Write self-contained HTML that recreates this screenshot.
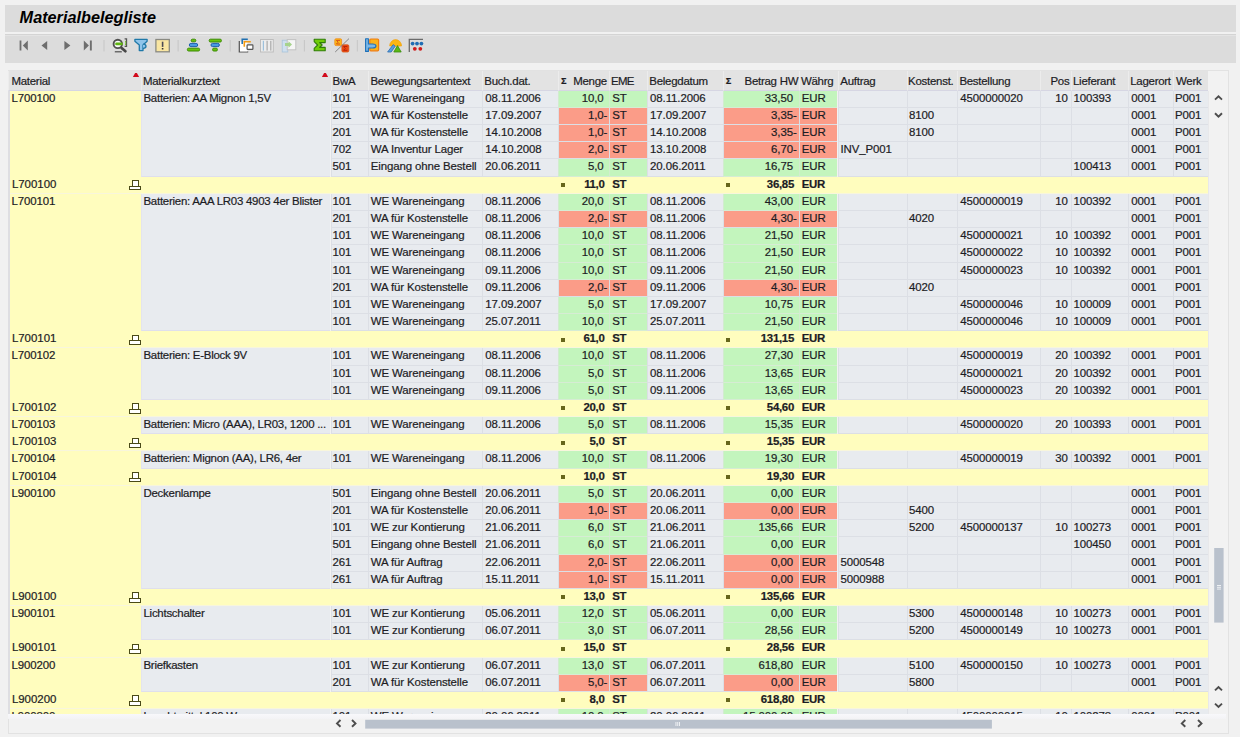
<!DOCTYPE html>
<html><head><meta charset="utf-8">
<style>
*{margin:0;padding:0}
html,body{width:1240px;height:737px;overflow:hidden;background:#f1f1f1;font-family:"Liberation Sans",sans-serif;color:#1c1c24}
.c,.h,.sub{-webkit-text-stroke:0.2px #1c1c24}
.abs{position:absolute}
#title{position:absolute;left:5px;top:5px;width:1231px;height:27px;background:#dcdcdc}
#title span{position:absolute;left:14.6px;top:2.6px;font-size:16.25px;font-weight:bold;font-style:italic;color:#000;letter-spacing:0}
#tb{position:absolute;left:5px;top:34.2px;width:1231px;height:28.5px;background:#dcdcdc;border-top:1px solid #d4d4d4;box-shadow:inset 0 1px 0 #e4e4e4;box-sizing:border-box}
#tb svg{position:absolute;overflow:visible}
.sep{position:absolute;top:6px;width:1px;height:11px;background:#c4c4c4}
#gridbox{position:absolute;left:8px;top:70px;width:1220.6px;height:664px;background:#f2f2f2;border:1px solid #e2e2e2;box-sizing:border-box}
#hdrrow{position:absolute;left:8.4px;top:70.5px;width:1199.6px;height:20px;background:#e3e3e3}
.h{position:absolute;top:70.5px;height:20px;box-sizing:border-box;border-left:1px solid #ececec;border-bottom:1px solid #d6d6e3;font-size:11.45px;line-height:20px;letter-spacing:-0.25px;white-space:nowrap;overflow:hidden}
.h span{position:absolute;left:3px;top:0}
.h.r span{left:auto;right:3px}
.tri{position:absolute;top:2.3px;width:6.2px;height:4.2px;background:#d20a1c;clip-path:polygon(0 100%,100% 100%,62% 0,38% 0)}
.sig{position:absolute;left:1.6px;top:0.3px;font-style:normal;font-size:9.2px;font-weight:bold}
#clip{position:absolute;left:8.4px;top:90.5px;width:1199.6px;height:623px;overflow:hidden}
#inner{position:absolute;left:-8.4px;top:-90.5px;width:1240px;height:737px}
.c{position:absolute;height:17.177px;box-sizing:border-box;border-left:1px solid #dcdfe5;border-bottom:1px solid #dcdfe5;font-size:11.45px;line-height:14.5px;letter-spacing:-0.1px;white-space:nowrap;overflow:hidden}
.c span{position:absolute;left:2px;top:0}
.c.r span{left:auto;right:3.5px}
.c.pos span,.c.neg span{right:2px}
.c i, .st i{font-style:normal;visibility:hidden}
.txt span{letter-spacing:-0.25px}
.tt span{letter-spacing:-0.12px}
.mat{background:#fffdbe;border-left:1px solid #ececf0;border-bottom:0}
.txt{background:#e8ebef;border-left:1px solid #e4e4ee;border-bottom:1px solid #dfdfec}
.g{background:#e8ebef}
.pos{background:#c3f5bd;border-left-color:#d2eccf!important;border-bottom-color:#d6ecd4!important}
.neg{background:#fb9c88}
.sub{position:absolute;left:8.4px;width:1199.6px;height:17.177px;box-sizing:border-box;background:#fffdbe;border-bottom:1px solid #f8f6dc;font-size:11.45px;line-height:14.3px;white-space:nowrap}
.sub span{position:absolute;top:0}
.sub .st{font-weight:bold;letter-spacing:-0.3px}
.sub .st.r{text-align:right}
.sq{position:absolute;top:6.4px;width:4.2px;height:4px;background:#66661c}
.ico{position:absolute;top:0;width:14px;height:17px}
.ico:before{content:"";position:absolute;left:3.6px;top:3.3px;width:6.75px;height:6.2px;box-sizing:border-box;border:1.6px solid #4a4a18;border-bottom:0;background:#fff}
.ico:after{content:"";position:absolute;left:0.6px;top:9px;width:12.5px;height:4.7px;box-sizing:border-box;border:1.6px solid #4a4a18;background:#fff}
#vsb{position:absolute;left:1208px;top:90.5px;width:19px;height:623px}
#hsb{position:absolute;left:8.4px;top:714px;width:1218px;height:18px}
.thumb{position:absolute;background:#b9c2cd}
.chev{position:absolute;width:5px;height:5px;border-left:2px solid #555;border-top:2px solid #555;box-sizing:border-box}
</style></head><body>
<div id="title"><span>Materialbelegliste</span></div>
<div id="tb"></div>
<svg style="position:absolute;left:0;top:0" width="440" height="64" viewBox="0 0 440 64">
 <g fill="#6e6e6e">
  <rect x="19.6" y="40.5" width="1.8" height="10"/><path d="M27.8 40.5 L22.8 45.5 L27.8 50.5Z"/>
  <path d="M47.2 41 L41.5 45.5 L47.2 50Z"/>
  <path d="M64.4 41 L70.4 45.5 L64.4 50Z"/>
  <path d="M83.8 40.5 L88.9 45.5 L83.8 50.5Z"/><rect x="89.9" y="40.5" width="1.9" height="10"/>
 </g>
 <g fill="#c6c6c6">
  <rect x="103.5" y="40" width="1" height="11.5"/>
  <rect x="177.6" y="40" width="1" height="11.5"/>
  <rect x="229.7" y="40" width="1" height="11.5"/>
  <rect x="303.9" y="40" width="1" height="11.5"/>
  <rect x="356.8" y="40" width="1" height="11.5"/>
 </g>
 <!-- find -->
 <g>
  <path d="M124.6 38.9 H126.5 V46.4 H124.6" fill="none" stroke="#555" stroke-width="1.3"/>
  <rect x="125" y="41.2" width="1.2" height="1.4" fill="#6abf1a"/><rect x="125" y="43.4" width="1.2" height="1.4" fill="#6abf1a"/>
  <circle cx="117.8" cy="43.9" r="4.2" fill="#fafafa" stroke="#505050" stroke-width="1.9"/>
  <rect x="115.2" y="42.5" width="7.6" height="2.8" rx="1.3" fill="#5fb412"/>
  <path d="M121.6 48 L125.4 51.2" stroke="#484848" stroke-width="2.8" stroke-linecap="round"/>
  <rect x="114.8" y="51.2" width="7" height="1.2" fill="#505050"/>
 </g>
 <!-- filter -->
 <path d="M134.9 39.3 H147.1 V41.2 L143 45 V50.6 H139.3 V45 L134.9 41.2Z" fill="#8fc4ea" stroke="#1f78a8" stroke-width="1.3" stroke-linejoin="round"/>
 <path d="M143 44.2 Q146 44.2 146 46.3 Q146 48.3 143 48.3" fill="#8fc4ea" stroke="#1f78a8" stroke-width="1.3"/>
 <!-- exclam -->
 <rect x="155.9" y="39.5" width="13.4" height="12.3" fill="#f9e6a2" stroke="#8a8a82" stroke-width="1.3"/>
 <rect x="161.8" y="41.7" width="1.6" height="5.2" fill="#4a4a55"/><rect x="161.8" y="48" width="1.6" height="1.5" fill="#333"/>
 <!-- sort asc -->
 <g stroke-width="1">
  <rect x="191.2" y="39.2" width="4.6" height="2.6" rx="1.2" fill="#6ac40c" stroke="#3a8a05"/>
  <rect x="189.3" y="43.4" width="8.4" height="3.2" rx="1.6" fill="#4a9be0" stroke="#1d5fae"/>
  <rect x="187.4" y="48.2" width="12.2" height="2.8" rx="1.2" fill="#6ac40c" stroke="#3a8a05"/>
  <rect x="209.2" y="39.2" width="12.2" height="2.8" rx="1.2" fill="#6ac40c" stroke="#3a8a05"/>
  <rect x="211" y="43.4" width="8.4" height="3.2" rx="1.6" fill="#4a9be0" stroke="#1d5fae"/>
  <rect x="212.6" y="48.2" width="4.8" height="2.8" rx="1.2" fill="#6ac40c" stroke="#3a8a05"/>
 </g>
 <!-- layout -->
 <path d="M239.3 41 V51.9 H248.2" fill="none" stroke="#555" stroke-width="1.2"/>
 <rect x="240" y="41.5" width="7.5" height="10" fill="#fff"/>
 <path d="M242.2 44 V39.2 H247.8" fill="none" stroke="#1f6fb0" stroke-width="1.5"/>
 <path d="M244.3 46.8 V41.8 H250.8" fill="none" stroke="#f39a12" stroke-width="1.6"/>
 <rect x="247.1" y="44.8" width="5.8" height="4.6" rx="0.6" fill="#fff" stroke="#555" stroke-width="1.2"/>
 <!-- columns (disabled) -->
 <rect x="260.5" y="39.5" width="12.8" height="12.5" fill="#ececec" stroke="#bdbdbd" stroke-width="1"/>
 <rect x="262.8" y="40.8" width="1.2" height="9.8" fill="#9cc0dc"/>
 <rect x="266.5" y="40.8" width="1.2" height="9.8" fill="#a9a9a9"/>
 <rect x="270.2" y="40.8" width="1.2" height="9.8" fill="#a9a9a9"/>
 <!-- export (disabled) -->
 <rect x="282.2" y="40.2" width="5.6" height="11.8" fill="#cfe0ef" stroke="#a9c3da" stroke-width="0.8"/>
 <rect x="287.2" y="39.6" width="8.6" height="10.2" fill="#f6f6f6" stroke="#c2c2c2" stroke-width="1"/>
 <path d="M285 43 H288.5 V41.3 L292 44.5 L288.5 47.7 V46 H285Z" fill="#a6d38c"/>
 <!-- sigma -->
 <path d="M314.2 39.2 H325.2 V42.6 H319.6 L322.2 45 L319.6 47.4 H325.2 V50.8 H314.2 V48.4 L317.6 45 L314.2 41.6Z" fill="#6fcc08" stroke="#2f7d06" stroke-width="1.1" stroke-linejoin="round"/>
 <!-- subtotal -->
 <rect x="334.8" y="38.8" width="6.8" height="6.8" rx="1.2" fill="#fbb814" stroke="#f08a1a" stroke-width="0.8"/>
 <path d="M336.4 40.4 H340 M336.4 40.4 L338.2 42.2 L336.4 44 H340" fill="none" stroke="#d4461a" stroke-width="0.9"/>
 <rect x="341.9" y="44.8" width="6.9" height="7.2" rx="1.2" fill="#ea4a10" stroke="#d8561a" stroke-width="0.8"/>
 <path d="M343.6 46.5 H347.2 M343.6 46.5 L345.4 48.4 L343.6 50.3 H347.2" fill="none" stroke="#b81e0a" stroke-width="0.9"/>
 <path d="M335.2 52 L349 38.6" stroke="#7a7a7a" stroke-width="0.9"/>
 <!-- icon20 -->
 <rect x="369.8" y="39" width="8.8" height="11.8" rx="1" fill="#fbb21a" stroke="#f07d12" stroke-width="1.2"/>
 <path d="M365.6 38.8 H368.4 V44 H372.5 Q376 44 376 46 Q376 48 372.5 48 H368.4 V51.4 H365.6Z" fill="#7bb7e6" stroke="#1e70b8" stroke-width="1.1" stroke-linejoin="round"/>
 <!-- chart -->
 <path d="M389.7 46 A5.9 6.4 0 0 1 401.5 46Z" fill="#fbb612" stroke="#f39a00" stroke-width="0.6"/>
 <path d="M387.6 52 L393.2 44.6 L395.2 46.2 L391.2 52Z" fill="#5a9ed8" stroke="#2a6cb4" stroke-width="0.8"/>
 <path d="M393.8 52 L397.5 45.6 L401.2 52Z" fill="#5cb814" stroke="#378a0c" stroke-width="0.8"/>
 <!-- dots -->
 <path d="M409.3 52 V39.4 H423" fill="none" stroke="#6b6b6b" stroke-width="1.3"/>
 <circle cx="412.6" cy="43.6" r="1.9" fill="#1f6db4"/><circle cx="417" cy="43.6" r="1.9" fill="#1f6db4"/><circle cx="421.4" cy="43.6" r="1.9" fill="#1f6db4"/>
 <circle cx="414.8" cy="48.8" r="1.9" fill="#d01c1c"/><circle cx="420.3" cy="48.8" r="1.9" fill="#d01c1c"/>
</svg>

 
</div>
<div id="gridbox"></div>
<div id="hdrrow"></div>
<div class="abs" style="left:1208px;top:90.5px;width:1.2px;height:623px;background:#e8e8ea"></div>
<div class="h" style="left:8.4px;width:132.9px"><b class="tri" style="right:2.2px"></b><span style="left:2px">Material</span></div>
<div class="h" style="left:141.3px;width:189.2px"><b class="tri" style="right:2.4px"></b><span style="left:0.7px">Materialkurztext</span></div>
<div class="h" style="left:330.5px;width:37.3px"><span style="left:1px">BwA</span></div>
<div class="h" style="left:367.8px;width:114.5px"><span style="left:1.6px">Bewegungsartentext</span></div>
<div class="h" style="left:482.3px;width:76px"><span style="left:1px">Buch.dat.</span></div>
<div class="h r" style="left:558.3px;width:51px"><em class="sig">&Sigma;</em><span style="right:2.4px">Menge</span></div>
<div class="h" style="left:609.3px;width:37.8px"><span style="left:0.6px;letter-spacing:-0.6px">EME</span></div>
<div class="h" style="left:647.1px;width:76.1px"><span style="left:1.2px">Belegdatum</span></div>
<div class="h r" style="left:723.2px;width:75.5px"><em class="sig">&Sigma;</em><span style="right:0.5px">Betrag HW</span></div>
<div class="h" style="left:798.7px;width:38.8px"><span style="left:1.2px">Währg</span></div>
<div class="h" style="left:837.5px;width:69.4px"><span style="left:1.8px">Auftrag</span></div>
<div class="h" style="left:906.9px;width:50.3px"><span style="left:0.2px">Kostenst.</span></div>
<div class="h" style="left:957.2px;width:83.1px"><span style="left:1.2px">Bestellung</span></div>
<div class="h r" style="left:1040.3px;width:31.1px"><span style="right:2px">Pos</span></div>
<div class="h" style="left:1071.4px;width:56.8px"><span style="left:0.6px">Lieferant</span></div>
<div class="h" style="left:1128.2px;width:45.2px"><span style="left:1px">Lagerort</span></div>
<div class="h" style="left:1173.4px;width:34.6px"><span style="left:1.6px">Werk</span></div>
<div class="abs" style="left:8.4px;top:713.6px;width:1218px;height:5px;background:linear-gradient(#f8f8fb,#f3f3f5)"></div>
<div id="clip"><div id="inner">
<div class="c mat" style="left:8.4px;top:90.75px;width:132.9px;height:85.88px"><span>L700100</span></div>
<div class="c txt" style="left:141.3px;top:90.75px;width:189.2px;height:85.88px"><span style="left:1.2px">Batterien: AA Mignon 1,5V</span></div>
<div class="c g" style="left:330.5px;top:90.75px;width:37.3px"><span style="left:1px">101</span></div>
<div class="c g tt" style="left:367.8px;top:90.75px;width:114.5px"><span>WE Wareneingang</span></div>
<div class="c g" style="left:482.3px;top:90.75px;width:76px"><span>08.11.2006</span></div>
<div class="c pos r" style="left:558.3px;top:90.75px;width:51px"><span>10,0<i>-</i></span></div>
<div class="c pos" style="left:609.3px;top:90.75px;width:37.8px"><span>ST</span></div>
<div class="c g" style="left:647.1px;top:90.75px;width:76.1px"><span>08.11.2006</span></div>
<div class="c pos r" style="left:723.2px;top:90.75px;width:75.5px"><span>33,50<i>-</i></span></div>
<div class="c pos" style="left:798.7px;top:90.75px;width:38.8px"><span>EUR</span></div>
<div class="c g" style="left:837.5px;top:90.75px;width:69.4px"><span></span></div>
<div class="c g" style="left:906.9px;top:90.75px;width:50.3px"><span style="left:1.2px"></span></div>
<div class="c g" style="left:957.2px;top:90.75px;width:83.1px"><span>4500000020</span></div>
<div class="c g r" style="left:1040.3px;top:90.75px;width:31.1px"><span>10</span></div>
<div class="c g" style="left:1071.4px;top:90.75px;width:56.8px"><span style="left:1px">100393</span></div>
<div class="c g" style="left:1128.2px;top:90.75px;width:45.2px"><span>0001</span></div>
<div class="c g" style="left:1173.4px;top:90.75px;width:34.6px"><span style="left:0.6px">P001</span></div>
<div class="c g" style="left:330.5px;top:107.93px;width:37.3px"><span style="left:1px">201</span></div>
<div class="c g tt" style="left:367.8px;top:107.93px;width:114.5px"><span>WA für Kostenstelle</span></div>
<div class="c g" style="left:482.3px;top:107.93px;width:76px"><span>17.09.2007</span></div>
<div class="c neg r" style="left:558.3px;top:107.93px;width:51px"><span>1,0-</span></div>
<div class="c neg" style="left:609.3px;top:107.93px;width:37.8px"><span>ST</span></div>
<div class="c g" style="left:647.1px;top:107.93px;width:76.1px"><span>17.09.2007</span></div>
<div class="c neg r" style="left:723.2px;top:107.93px;width:75.5px"><span>3,35-</span></div>
<div class="c neg" style="left:798.7px;top:107.93px;width:38.8px"><span>EUR</span></div>
<div class="c g" style="left:837.5px;top:107.93px;width:69.4px"><span></span></div>
<div class="c g" style="left:906.9px;top:107.93px;width:50.3px"><span style="left:1.2px">8100</span></div>
<div class="c g" style="left:957.2px;top:107.93px;width:83.1px"><span></span></div>
<div class="c g r" style="left:1040.3px;top:107.93px;width:31.1px"><span></span></div>
<div class="c g" style="left:1071.4px;top:107.93px;width:56.8px"><span style="left:1px"></span></div>
<div class="c g" style="left:1128.2px;top:107.93px;width:45.2px"><span>0001</span></div>
<div class="c g" style="left:1173.4px;top:107.93px;width:34.6px"><span style="left:0.6px">P001</span></div>
<div class="c g" style="left:330.5px;top:125.1px;width:37.3px"><span style="left:1px">201</span></div>
<div class="c g tt" style="left:367.8px;top:125.1px;width:114.5px"><span>WA für Kostenstelle</span></div>
<div class="c g" style="left:482.3px;top:125.1px;width:76px"><span>14.10.2008</span></div>
<div class="c neg r" style="left:558.3px;top:125.1px;width:51px"><span>1,0-</span></div>
<div class="c neg" style="left:609.3px;top:125.1px;width:37.8px"><span>ST</span></div>
<div class="c g" style="left:647.1px;top:125.1px;width:76.1px"><span>14.10.2008</span></div>
<div class="c neg r" style="left:723.2px;top:125.1px;width:75.5px"><span>3,35-</span></div>
<div class="c neg" style="left:798.7px;top:125.1px;width:38.8px"><span>EUR</span></div>
<div class="c g" style="left:837.5px;top:125.1px;width:69.4px"><span></span></div>
<div class="c g" style="left:906.9px;top:125.1px;width:50.3px"><span style="left:1.2px">8100</span></div>
<div class="c g" style="left:957.2px;top:125.1px;width:83.1px"><span></span></div>
<div class="c g r" style="left:1040.3px;top:125.1px;width:31.1px"><span></span></div>
<div class="c g" style="left:1071.4px;top:125.1px;width:56.8px"><span style="left:1px"></span></div>
<div class="c g" style="left:1128.2px;top:125.1px;width:45.2px"><span>0001</span></div>
<div class="c g" style="left:1173.4px;top:125.1px;width:34.6px"><span style="left:0.6px">P001</span></div>
<div class="c g" style="left:330.5px;top:142.28px;width:37.3px"><span style="left:1px">702</span></div>
<div class="c g tt" style="left:367.8px;top:142.28px;width:114.5px"><span>WA Inventur Lager</span></div>
<div class="c g" style="left:482.3px;top:142.28px;width:76px"><span>14.10.2008</span></div>
<div class="c neg r" style="left:558.3px;top:142.28px;width:51px"><span>2,0-</span></div>
<div class="c neg" style="left:609.3px;top:142.28px;width:37.8px"><span>ST</span></div>
<div class="c g" style="left:647.1px;top:142.28px;width:76.1px"><span>13.10.2008</span></div>
<div class="c neg r" style="left:723.2px;top:142.28px;width:75.5px"><span>6,70-</span></div>
<div class="c neg" style="left:798.7px;top:142.28px;width:38.8px"><span>EUR</span></div>
<div class="c g" style="left:837.5px;top:142.28px;width:69.4px"><span>INV_P001</span></div>
<div class="c g" style="left:906.9px;top:142.28px;width:50.3px"><span style="left:1.2px"></span></div>
<div class="c g" style="left:957.2px;top:142.28px;width:83.1px"><span></span></div>
<div class="c g r" style="left:1040.3px;top:142.28px;width:31.1px"><span></span></div>
<div class="c g" style="left:1071.4px;top:142.28px;width:56.8px"><span style="left:1px"></span></div>
<div class="c g" style="left:1128.2px;top:142.28px;width:45.2px"><span>0001</span></div>
<div class="c g" style="left:1173.4px;top:142.28px;width:34.6px"><span style="left:0.6px">P001</span></div>
<div class="c g" style="left:330.5px;top:159.46px;width:37.3px"><span style="left:1px">501</span></div>
<div class="c g tt" style="left:367.8px;top:159.46px;width:114.5px"><span>Eingang ohne Bestell</span></div>
<div class="c g" style="left:482.3px;top:159.46px;width:76px"><span>20.06.2011</span></div>
<div class="c pos r" style="left:558.3px;top:159.46px;width:51px"><span>5,0<i>-</i></span></div>
<div class="c pos" style="left:609.3px;top:159.46px;width:37.8px"><span>ST</span></div>
<div class="c g" style="left:647.1px;top:159.46px;width:76.1px"><span>20.06.2011</span></div>
<div class="c pos r" style="left:723.2px;top:159.46px;width:75.5px"><span>16,75<i>-</i></span></div>
<div class="c pos" style="left:798.7px;top:159.46px;width:38.8px"><span>EUR</span></div>
<div class="c g" style="left:837.5px;top:159.46px;width:69.4px"><span></span></div>
<div class="c g" style="left:906.9px;top:159.46px;width:50.3px"><span style="left:1.2px"></span></div>
<div class="c g" style="left:957.2px;top:159.46px;width:83.1px"><span></span></div>
<div class="c g r" style="left:1040.3px;top:159.46px;width:31.1px"><span></span></div>
<div class="c g" style="left:1071.4px;top:159.46px;width:56.8px"><span style="left:1px">100413</span></div>
<div class="c g" style="left:1128.2px;top:159.46px;width:45.2px"><span>0001</span></div>
<div class="c g" style="left:1173.4px;top:159.46px;width:34.6px"><span style="left:0.6px">P001</span></div>
<div class="sub" style="top:176.63px">
<span class="sm" style="left:3.5px">L700100</span>
<b class="ico" style="left:120px"></b>
<b class="sq" style="left:552.9px"></b>
<span class="st r" style="left:549.9px;width:49.8px">11,0<i>-</i></span>
<span class="st" style="left:603.9px">ST</span>
<b class="sq" style="left:717.9px"></b>
<span class="st r" style="left:714.8px;width:74.3px">36,85<i>-</i></span>
<span class="st" style="left:793.3px">EUR</span>
</div>
<div class="c mat" style="left:8.4px;top:193.81px;width:132.9px;height:137.42px"><span>L700101</span></div>
<div class="c txt" style="left:141.3px;top:193.81px;width:189.2px;height:137.42px"><span style="left:1.2px">Batterien: AAA LR03 4903 4er Blister</span></div>
<div class="c g" style="left:330.5px;top:193.81px;width:37.3px"><span style="left:1px">101</span></div>
<div class="c g tt" style="left:367.8px;top:193.81px;width:114.5px"><span>WE Wareneingang</span></div>
<div class="c g" style="left:482.3px;top:193.81px;width:76px"><span>08.11.2006</span></div>
<div class="c pos r" style="left:558.3px;top:193.81px;width:51px"><span>20,0<i>-</i></span></div>
<div class="c pos" style="left:609.3px;top:193.81px;width:37.8px"><span>ST</span></div>
<div class="c g" style="left:647.1px;top:193.81px;width:76.1px"><span>08.11.2006</span></div>
<div class="c pos r" style="left:723.2px;top:193.81px;width:75.5px"><span>43,00<i>-</i></span></div>
<div class="c pos" style="left:798.7px;top:193.81px;width:38.8px"><span>EUR</span></div>
<div class="c g" style="left:837.5px;top:193.81px;width:69.4px"><span></span></div>
<div class="c g" style="left:906.9px;top:193.81px;width:50.3px"><span style="left:1.2px"></span></div>
<div class="c g" style="left:957.2px;top:193.81px;width:83.1px"><span>4500000019</span></div>
<div class="c g r" style="left:1040.3px;top:193.81px;width:31.1px"><span>10</span></div>
<div class="c g" style="left:1071.4px;top:193.81px;width:56.8px"><span style="left:1px">100392</span></div>
<div class="c g" style="left:1128.2px;top:193.81px;width:45.2px"><span>0001</span></div>
<div class="c g" style="left:1173.4px;top:193.81px;width:34.6px"><span style="left:0.6px">P001</span></div>
<div class="c g" style="left:330.5px;top:210.99px;width:37.3px"><span style="left:1px">201</span></div>
<div class="c g tt" style="left:367.8px;top:210.99px;width:114.5px"><span>WA für Kostenstelle</span></div>
<div class="c g" style="left:482.3px;top:210.99px;width:76px"><span>08.11.2006</span></div>
<div class="c neg r" style="left:558.3px;top:210.99px;width:51px"><span>2,0-</span></div>
<div class="c neg" style="left:609.3px;top:210.99px;width:37.8px"><span>ST</span></div>
<div class="c g" style="left:647.1px;top:210.99px;width:76.1px"><span>08.11.2006</span></div>
<div class="c neg r" style="left:723.2px;top:210.99px;width:75.5px"><span>4,30-</span></div>
<div class="c neg" style="left:798.7px;top:210.99px;width:38.8px"><span>EUR</span></div>
<div class="c g" style="left:837.5px;top:210.99px;width:69.4px"><span></span></div>
<div class="c g" style="left:906.9px;top:210.99px;width:50.3px"><span style="left:1.2px">4020</span></div>
<div class="c g" style="left:957.2px;top:210.99px;width:83.1px"><span></span></div>
<div class="c g r" style="left:1040.3px;top:210.99px;width:31.1px"><span></span></div>
<div class="c g" style="left:1071.4px;top:210.99px;width:56.8px"><span style="left:1px"></span></div>
<div class="c g" style="left:1128.2px;top:210.99px;width:45.2px"><span>0001</span></div>
<div class="c g" style="left:1173.4px;top:210.99px;width:34.6px"><span style="left:0.6px">P001</span></div>
<div class="c g" style="left:330.5px;top:228.17px;width:37.3px"><span style="left:1px">101</span></div>
<div class="c g tt" style="left:367.8px;top:228.17px;width:114.5px"><span>WE Wareneingang</span></div>
<div class="c g" style="left:482.3px;top:228.17px;width:76px"><span>08.11.2006</span></div>
<div class="c pos r" style="left:558.3px;top:228.17px;width:51px"><span>10,0<i>-</i></span></div>
<div class="c pos" style="left:609.3px;top:228.17px;width:37.8px"><span>ST</span></div>
<div class="c g" style="left:647.1px;top:228.17px;width:76.1px"><span>08.11.2006</span></div>
<div class="c pos r" style="left:723.2px;top:228.17px;width:75.5px"><span>21,50<i>-</i></span></div>
<div class="c pos" style="left:798.7px;top:228.17px;width:38.8px"><span>EUR</span></div>
<div class="c g" style="left:837.5px;top:228.17px;width:69.4px"><span></span></div>
<div class="c g" style="left:906.9px;top:228.17px;width:50.3px"><span style="left:1.2px"></span></div>
<div class="c g" style="left:957.2px;top:228.17px;width:83.1px"><span>4500000021</span></div>
<div class="c g r" style="left:1040.3px;top:228.17px;width:31.1px"><span>10</span></div>
<div class="c g" style="left:1071.4px;top:228.17px;width:56.8px"><span style="left:1px">100392</span></div>
<div class="c g" style="left:1128.2px;top:228.17px;width:45.2px"><span>0001</span></div>
<div class="c g" style="left:1173.4px;top:228.17px;width:34.6px"><span style="left:0.6px">P001</span></div>
<div class="c g" style="left:330.5px;top:245.34px;width:37.3px"><span style="left:1px">101</span></div>
<div class="c g tt" style="left:367.8px;top:245.34px;width:114.5px"><span>WE Wareneingang</span></div>
<div class="c g" style="left:482.3px;top:245.34px;width:76px"><span>08.11.2006</span></div>
<div class="c pos r" style="left:558.3px;top:245.34px;width:51px"><span>10,0<i>-</i></span></div>
<div class="c pos" style="left:609.3px;top:245.34px;width:37.8px"><span>ST</span></div>
<div class="c g" style="left:647.1px;top:245.34px;width:76.1px"><span>08.11.2006</span></div>
<div class="c pos r" style="left:723.2px;top:245.34px;width:75.5px"><span>21,50<i>-</i></span></div>
<div class="c pos" style="left:798.7px;top:245.34px;width:38.8px"><span>EUR</span></div>
<div class="c g" style="left:837.5px;top:245.34px;width:69.4px"><span></span></div>
<div class="c g" style="left:906.9px;top:245.34px;width:50.3px"><span style="left:1.2px"></span></div>
<div class="c g" style="left:957.2px;top:245.34px;width:83.1px"><span>4500000022</span></div>
<div class="c g r" style="left:1040.3px;top:245.34px;width:31.1px"><span>10</span></div>
<div class="c g" style="left:1071.4px;top:245.34px;width:56.8px"><span style="left:1px">100392</span></div>
<div class="c g" style="left:1128.2px;top:245.34px;width:45.2px"><span>0001</span></div>
<div class="c g" style="left:1173.4px;top:245.34px;width:34.6px"><span style="left:0.6px">P001</span></div>
<div class="c g" style="left:330.5px;top:262.52px;width:37.3px"><span style="left:1px">101</span></div>
<div class="c g tt" style="left:367.8px;top:262.52px;width:114.5px"><span>WE Wareneingang</span></div>
<div class="c g" style="left:482.3px;top:262.52px;width:76px"><span>09.11.2006</span></div>
<div class="c pos r" style="left:558.3px;top:262.52px;width:51px"><span>10,0<i>-</i></span></div>
<div class="c pos" style="left:609.3px;top:262.52px;width:37.8px"><span>ST</span></div>
<div class="c g" style="left:647.1px;top:262.52px;width:76.1px"><span>09.11.2006</span></div>
<div class="c pos r" style="left:723.2px;top:262.52px;width:75.5px"><span>21,50<i>-</i></span></div>
<div class="c pos" style="left:798.7px;top:262.52px;width:38.8px"><span>EUR</span></div>
<div class="c g" style="left:837.5px;top:262.52px;width:69.4px"><span></span></div>
<div class="c g" style="left:906.9px;top:262.52px;width:50.3px"><span style="left:1.2px"></span></div>
<div class="c g" style="left:957.2px;top:262.52px;width:83.1px"><span>4500000023</span></div>
<div class="c g r" style="left:1040.3px;top:262.52px;width:31.1px"><span>10</span></div>
<div class="c g" style="left:1071.4px;top:262.52px;width:56.8px"><span style="left:1px">100392</span></div>
<div class="c g" style="left:1128.2px;top:262.52px;width:45.2px"><span>0001</span></div>
<div class="c g" style="left:1173.4px;top:262.52px;width:34.6px"><span style="left:0.6px">P001</span></div>
<div class="c g" style="left:330.5px;top:279.7px;width:37.3px"><span style="left:1px">201</span></div>
<div class="c g tt" style="left:367.8px;top:279.7px;width:114.5px"><span>WA für Kostenstelle</span></div>
<div class="c g" style="left:482.3px;top:279.7px;width:76px"><span>09.11.2006</span></div>
<div class="c neg r" style="left:558.3px;top:279.7px;width:51px"><span>2,0-</span></div>
<div class="c neg" style="left:609.3px;top:279.7px;width:37.8px"><span>ST</span></div>
<div class="c g" style="left:647.1px;top:279.7px;width:76.1px"><span>09.11.2006</span></div>
<div class="c neg r" style="left:723.2px;top:279.7px;width:75.5px"><span>4,30-</span></div>
<div class="c neg" style="left:798.7px;top:279.7px;width:38.8px"><span>EUR</span></div>
<div class="c g" style="left:837.5px;top:279.7px;width:69.4px"><span></span></div>
<div class="c g" style="left:906.9px;top:279.7px;width:50.3px"><span style="left:1.2px">4020</span></div>
<div class="c g" style="left:957.2px;top:279.7px;width:83.1px"><span></span></div>
<div class="c g r" style="left:1040.3px;top:279.7px;width:31.1px"><span></span></div>
<div class="c g" style="left:1071.4px;top:279.7px;width:56.8px"><span style="left:1px"></span></div>
<div class="c g" style="left:1128.2px;top:279.7px;width:45.2px"><span>0001</span></div>
<div class="c g" style="left:1173.4px;top:279.7px;width:34.6px"><span style="left:0.6px">P001</span></div>
<div class="c g" style="left:330.5px;top:296.87px;width:37.3px"><span style="left:1px">101</span></div>
<div class="c g tt" style="left:367.8px;top:296.87px;width:114.5px"><span>WE Wareneingang</span></div>
<div class="c g" style="left:482.3px;top:296.87px;width:76px"><span>17.09.2007</span></div>
<div class="c pos r" style="left:558.3px;top:296.87px;width:51px"><span>5,0<i>-</i></span></div>
<div class="c pos" style="left:609.3px;top:296.87px;width:37.8px"><span>ST</span></div>
<div class="c g" style="left:647.1px;top:296.87px;width:76.1px"><span>17.09.2007</span></div>
<div class="c pos r" style="left:723.2px;top:296.87px;width:75.5px"><span>10,75<i>-</i></span></div>
<div class="c pos" style="left:798.7px;top:296.87px;width:38.8px"><span>EUR</span></div>
<div class="c g" style="left:837.5px;top:296.87px;width:69.4px"><span></span></div>
<div class="c g" style="left:906.9px;top:296.87px;width:50.3px"><span style="left:1.2px"></span></div>
<div class="c g" style="left:957.2px;top:296.87px;width:83.1px"><span>4500000046</span></div>
<div class="c g r" style="left:1040.3px;top:296.87px;width:31.1px"><span>10</span></div>
<div class="c g" style="left:1071.4px;top:296.87px;width:56.8px"><span style="left:1px">100009</span></div>
<div class="c g" style="left:1128.2px;top:296.87px;width:45.2px"><span>0001</span></div>
<div class="c g" style="left:1173.4px;top:296.87px;width:34.6px"><span style="left:0.6px">P001</span></div>
<div class="c g" style="left:330.5px;top:314.05px;width:37.3px"><span style="left:1px">101</span></div>
<div class="c g tt" style="left:367.8px;top:314.05px;width:114.5px"><span>WE Wareneingang</span></div>
<div class="c g" style="left:482.3px;top:314.05px;width:76px"><span>25.07.2011</span></div>
<div class="c pos r" style="left:558.3px;top:314.05px;width:51px"><span>10,0<i>-</i></span></div>
<div class="c pos" style="left:609.3px;top:314.05px;width:37.8px"><span>ST</span></div>
<div class="c g" style="left:647.1px;top:314.05px;width:76.1px"><span>25.07.2011</span></div>
<div class="c pos r" style="left:723.2px;top:314.05px;width:75.5px"><span>21,50<i>-</i></span></div>
<div class="c pos" style="left:798.7px;top:314.05px;width:38.8px"><span>EUR</span></div>
<div class="c g" style="left:837.5px;top:314.05px;width:69.4px"><span></span></div>
<div class="c g" style="left:906.9px;top:314.05px;width:50.3px"><span style="left:1.2px"></span></div>
<div class="c g" style="left:957.2px;top:314.05px;width:83.1px"><span>4500000046</span></div>
<div class="c g r" style="left:1040.3px;top:314.05px;width:31.1px"><span>10</span></div>
<div class="c g" style="left:1071.4px;top:314.05px;width:56.8px"><span style="left:1px">100009</span></div>
<div class="c g" style="left:1128.2px;top:314.05px;width:45.2px"><span>0001</span></div>
<div class="c g" style="left:1173.4px;top:314.05px;width:34.6px"><span style="left:0.6px">P001</span></div>
<div class="sub" style="top:331.23px">
<span class="sm" style="left:3.5px">L700101</span>
<b class="ico" style="left:120px"></b>
<b class="sq" style="left:552.9px"></b>
<span class="st r" style="left:549.9px;width:49.8px">61,0<i>-</i></span>
<span class="st" style="left:603.9px">ST</span>
<b class="sq" style="left:717.9px"></b>
<span class="st r" style="left:714.8px;width:74.3px">131,15<i>-</i></span>
<span class="st" style="left:793.3px">EUR</span>
</div>
<div class="c mat" style="left:8.4px;top:348.4px;width:132.9px;height:51.53px"><span>L700102</span></div>
<div class="c txt" style="left:141.3px;top:348.4px;width:189.2px;height:51.53px"><span style="left:1.2px">Batterien: E-Block 9V</span></div>
<div class="c g" style="left:330.5px;top:348.4px;width:37.3px"><span style="left:1px">101</span></div>
<div class="c g tt" style="left:367.8px;top:348.4px;width:114.5px"><span>WE Wareneingang</span></div>
<div class="c g" style="left:482.3px;top:348.4px;width:76px"><span>08.11.2006</span></div>
<div class="c pos r" style="left:558.3px;top:348.4px;width:51px"><span>10,0<i>-</i></span></div>
<div class="c pos" style="left:609.3px;top:348.4px;width:37.8px"><span>ST</span></div>
<div class="c g" style="left:647.1px;top:348.4px;width:76.1px"><span>08.11.2006</span></div>
<div class="c pos r" style="left:723.2px;top:348.4px;width:75.5px"><span>27,30<i>-</i></span></div>
<div class="c pos" style="left:798.7px;top:348.4px;width:38.8px"><span>EUR</span></div>
<div class="c g" style="left:837.5px;top:348.4px;width:69.4px"><span></span></div>
<div class="c g" style="left:906.9px;top:348.4px;width:50.3px"><span style="left:1.2px"></span></div>
<div class="c g" style="left:957.2px;top:348.4px;width:83.1px"><span>4500000019</span></div>
<div class="c g r" style="left:1040.3px;top:348.4px;width:31.1px"><span>20</span></div>
<div class="c g" style="left:1071.4px;top:348.4px;width:56.8px"><span style="left:1px">100392</span></div>
<div class="c g" style="left:1128.2px;top:348.4px;width:45.2px"><span>0001</span></div>
<div class="c g" style="left:1173.4px;top:348.4px;width:34.6px"><span style="left:0.6px">P001</span></div>
<div class="c g" style="left:330.5px;top:365.58px;width:37.3px"><span style="left:1px">101</span></div>
<div class="c g tt" style="left:367.8px;top:365.58px;width:114.5px"><span>WE Wareneingang</span></div>
<div class="c g" style="left:482.3px;top:365.58px;width:76px"><span>08.11.2006</span></div>
<div class="c pos r" style="left:558.3px;top:365.58px;width:51px"><span>5,0<i>-</i></span></div>
<div class="c pos" style="left:609.3px;top:365.58px;width:37.8px"><span>ST</span></div>
<div class="c g" style="left:647.1px;top:365.58px;width:76.1px"><span>08.11.2006</span></div>
<div class="c pos r" style="left:723.2px;top:365.58px;width:75.5px"><span>13,65<i>-</i></span></div>
<div class="c pos" style="left:798.7px;top:365.58px;width:38.8px"><span>EUR</span></div>
<div class="c g" style="left:837.5px;top:365.58px;width:69.4px"><span></span></div>
<div class="c g" style="left:906.9px;top:365.58px;width:50.3px"><span style="left:1.2px"></span></div>
<div class="c g" style="left:957.2px;top:365.58px;width:83.1px"><span>4500000021</span></div>
<div class="c g r" style="left:1040.3px;top:365.58px;width:31.1px"><span>20</span></div>
<div class="c g" style="left:1071.4px;top:365.58px;width:56.8px"><span style="left:1px">100392</span></div>
<div class="c g" style="left:1128.2px;top:365.58px;width:45.2px"><span>0001</span></div>
<div class="c g" style="left:1173.4px;top:365.58px;width:34.6px"><span style="left:0.6px">P001</span></div>
<div class="c g" style="left:330.5px;top:382.76px;width:37.3px"><span style="left:1px">101</span></div>
<div class="c g tt" style="left:367.8px;top:382.76px;width:114.5px"><span>WE Wareneingang</span></div>
<div class="c g" style="left:482.3px;top:382.76px;width:76px"><span>09.11.2006</span></div>
<div class="c pos r" style="left:558.3px;top:382.76px;width:51px"><span>5,0<i>-</i></span></div>
<div class="c pos" style="left:609.3px;top:382.76px;width:37.8px"><span>ST</span></div>
<div class="c g" style="left:647.1px;top:382.76px;width:76.1px"><span>09.11.2006</span></div>
<div class="c pos r" style="left:723.2px;top:382.76px;width:75.5px"><span>13,65<i>-</i></span></div>
<div class="c pos" style="left:798.7px;top:382.76px;width:38.8px"><span>EUR</span></div>
<div class="c g" style="left:837.5px;top:382.76px;width:69.4px"><span></span></div>
<div class="c g" style="left:906.9px;top:382.76px;width:50.3px"><span style="left:1.2px"></span></div>
<div class="c g" style="left:957.2px;top:382.76px;width:83.1px"><span>4500000023</span></div>
<div class="c g r" style="left:1040.3px;top:382.76px;width:31.1px"><span>20</span></div>
<div class="c g" style="left:1071.4px;top:382.76px;width:56.8px"><span style="left:1px">100392</span></div>
<div class="c g" style="left:1128.2px;top:382.76px;width:45.2px"><span>0001</span></div>
<div class="c g" style="left:1173.4px;top:382.76px;width:34.6px"><span style="left:0.6px">P001</span></div>
<div class="sub" style="top:399.94px">
<span class="sm" style="left:3.5px">L700102</span>
<b class="ico" style="left:120px"></b>
<b class="sq" style="left:552.9px"></b>
<span class="st r" style="left:549.9px;width:49.8px">20,0<i>-</i></span>
<span class="st" style="left:603.9px">ST</span>
<b class="sq" style="left:717.9px"></b>
<span class="st r" style="left:714.8px;width:74.3px">54,60<i>-</i></span>
<span class="st" style="left:793.3px">EUR</span>
</div>
<div class="c mat" style="left:8.4px;top:417.11px;width:132.9px;height:17.18px"><span>L700103</span></div>
<div class="c txt" style="left:141.3px;top:417.11px;width:189.2px;height:17.18px"><span style="left:1.2px">Batterien: Micro (AAA), LR03, 1200 ...</span></div>
<div class="c g" style="left:330.5px;top:417.11px;width:37.3px"><span style="left:1px">101</span></div>
<div class="c g tt" style="left:367.8px;top:417.11px;width:114.5px"><span>WE Wareneingang</span></div>
<div class="c g" style="left:482.3px;top:417.11px;width:76px"><span>08.11.2006</span></div>
<div class="c pos r" style="left:558.3px;top:417.11px;width:51px"><span>5,0<i>-</i></span></div>
<div class="c pos" style="left:609.3px;top:417.11px;width:37.8px"><span>ST</span></div>
<div class="c g" style="left:647.1px;top:417.11px;width:76.1px"><span>08.11.2006</span></div>
<div class="c pos r" style="left:723.2px;top:417.11px;width:75.5px"><span>15,35<i>-</i></span></div>
<div class="c pos" style="left:798.7px;top:417.11px;width:38.8px"><span>EUR</span></div>
<div class="c g" style="left:837.5px;top:417.11px;width:69.4px"><span></span></div>
<div class="c g" style="left:906.9px;top:417.11px;width:50.3px"><span style="left:1.2px"></span></div>
<div class="c g" style="left:957.2px;top:417.11px;width:83.1px"><span>4500000020</span></div>
<div class="c g r" style="left:1040.3px;top:417.11px;width:31.1px"><span>20</span></div>
<div class="c g" style="left:1071.4px;top:417.11px;width:56.8px"><span style="left:1px">100393</span></div>
<div class="c g" style="left:1128.2px;top:417.11px;width:45.2px"><span>0001</span></div>
<div class="c g" style="left:1173.4px;top:417.11px;width:34.6px"><span style="left:0.6px">P001</span></div>
<div class="sub" style="top:434.29px">
<span class="sm" style="left:3.5px">L700103</span>
<b class="ico" style="left:120px"></b>
<b class="sq" style="left:552.9px"></b>
<span class="st r" style="left:549.9px;width:49.8px">5,0<i>-</i></span>
<span class="st" style="left:603.9px">ST</span>
<b class="sq" style="left:717.9px"></b>
<span class="st r" style="left:714.8px;width:74.3px">15,35<i>-</i></span>
<span class="st" style="left:793.3px">EUR</span>
</div>
<div class="c mat" style="left:8.4px;top:451.47px;width:132.9px;height:17.18px"><span>L700104</span></div>
<div class="c txt" style="left:141.3px;top:451.47px;width:189.2px;height:17.18px"><span style="left:1.2px">Batterien: Mignon (AA), LR6, 4er</span></div>
<div class="c g" style="left:330.5px;top:451.47px;width:37.3px"><span style="left:1px">101</span></div>
<div class="c g tt" style="left:367.8px;top:451.47px;width:114.5px"><span>WE Wareneingang</span></div>
<div class="c g" style="left:482.3px;top:451.47px;width:76px"><span>08.11.2006</span></div>
<div class="c pos r" style="left:558.3px;top:451.47px;width:51px"><span>10,0<i>-</i></span></div>
<div class="c pos" style="left:609.3px;top:451.47px;width:37.8px"><span>ST</span></div>
<div class="c g" style="left:647.1px;top:451.47px;width:76.1px"><span>08.11.2006</span></div>
<div class="c pos r" style="left:723.2px;top:451.47px;width:75.5px"><span>19,30<i>-</i></span></div>
<div class="c pos" style="left:798.7px;top:451.47px;width:38.8px"><span>EUR</span></div>
<div class="c g" style="left:837.5px;top:451.47px;width:69.4px"><span></span></div>
<div class="c g" style="left:906.9px;top:451.47px;width:50.3px"><span style="left:1.2px"></span></div>
<div class="c g" style="left:957.2px;top:451.47px;width:83.1px"><span>4500000019</span></div>
<div class="c g r" style="left:1040.3px;top:451.47px;width:31.1px"><span>30</span></div>
<div class="c g" style="left:1071.4px;top:451.47px;width:56.8px"><span style="left:1px">100392</span></div>
<div class="c g" style="left:1128.2px;top:451.47px;width:45.2px"><span>0001</span></div>
<div class="c g" style="left:1173.4px;top:451.47px;width:34.6px"><span style="left:0.6px">P001</span></div>
<div class="sub" style="top:468.64px">
<span class="sm" style="left:3.5px">L700104</span>
<b class="ico" style="left:120px"></b>
<b class="sq" style="left:552.9px"></b>
<span class="st r" style="left:549.9px;width:49.8px">10,0<i>-</i></span>
<span class="st" style="left:603.9px">ST</span>
<b class="sq" style="left:717.9px"></b>
<span class="st r" style="left:714.8px;width:74.3px">19,30<i>-</i></span>
<span class="st" style="left:793.3px">EUR</span>
</div>
<div class="c mat" style="left:8.4px;top:485.82px;width:132.9px;height:103.06px"><span>L900100</span></div>
<div class="c txt" style="left:141.3px;top:485.82px;width:189.2px;height:103.06px"><span style="left:1.2px">Deckenlampe</span></div>
<div class="c g" style="left:330.5px;top:485.82px;width:37.3px"><span style="left:1px">501</span></div>
<div class="c g tt" style="left:367.8px;top:485.82px;width:114.5px"><span>Eingang ohne Bestell</span></div>
<div class="c g" style="left:482.3px;top:485.82px;width:76px"><span>20.06.2011</span></div>
<div class="c pos r" style="left:558.3px;top:485.82px;width:51px"><span>5,0<i>-</i></span></div>
<div class="c pos" style="left:609.3px;top:485.82px;width:37.8px"><span>ST</span></div>
<div class="c g" style="left:647.1px;top:485.82px;width:76.1px"><span>20.06.2011</span></div>
<div class="c pos r" style="left:723.2px;top:485.82px;width:75.5px"><span>0,00<i>-</i></span></div>
<div class="c pos" style="left:798.7px;top:485.82px;width:38.8px"><span>EUR</span></div>
<div class="c g" style="left:837.5px;top:485.82px;width:69.4px"><span></span></div>
<div class="c g" style="left:906.9px;top:485.82px;width:50.3px"><span style="left:1.2px"></span></div>
<div class="c g" style="left:957.2px;top:485.82px;width:83.1px"><span></span></div>
<div class="c g r" style="left:1040.3px;top:485.82px;width:31.1px"><span></span></div>
<div class="c g" style="left:1071.4px;top:485.82px;width:56.8px"><span style="left:1px"></span></div>
<div class="c g" style="left:1128.2px;top:485.82px;width:45.2px"><span>0001</span></div>
<div class="c g" style="left:1173.4px;top:485.82px;width:34.6px"><span style="left:0.6px">P001</span></div>
<div class="c g" style="left:330.5px;top:503px;width:37.3px"><span style="left:1px">201</span></div>
<div class="c g tt" style="left:367.8px;top:503px;width:114.5px"><span>WA für Kostenstelle</span></div>
<div class="c g" style="left:482.3px;top:503px;width:76px"><span>20.06.2011</span></div>
<div class="c neg r" style="left:558.3px;top:503px;width:51px"><span>1,0-</span></div>
<div class="c neg" style="left:609.3px;top:503px;width:37.8px"><span>ST</span></div>
<div class="c g" style="left:647.1px;top:503px;width:76.1px"><span>20.06.2011</span></div>
<div class="c neg r" style="left:723.2px;top:503px;width:75.5px"><span>0,00<i>-</i></span></div>
<div class="c neg" style="left:798.7px;top:503px;width:38.8px"><span>EUR</span></div>
<div class="c g" style="left:837.5px;top:503px;width:69.4px"><span></span></div>
<div class="c g" style="left:906.9px;top:503px;width:50.3px"><span style="left:1.2px">5400</span></div>
<div class="c g" style="left:957.2px;top:503px;width:83.1px"><span></span></div>
<div class="c g r" style="left:1040.3px;top:503px;width:31.1px"><span></span></div>
<div class="c g" style="left:1071.4px;top:503px;width:56.8px"><span style="left:1px"></span></div>
<div class="c g" style="left:1128.2px;top:503px;width:45.2px"><span>0001</span></div>
<div class="c g" style="left:1173.4px;top:503px;width:34.6px"><span style="left:0.6px">P001</span></div>
<div class="c g" style="left:330.5px;top:520.17px;width:37.3px"><span style="left:1px">101</span></div>
<div class="c g tt" style="left:367.8px;top:520.17px;width:114.5px"><span>WE zur Kontierung</span></div>
<div class="c g" style="left:482.3px;top:520.17px;width:76px"><span>21.06.2011</span></div>
<div class="c pos r" style="left:558.3px;top:520.17px;width:51px"><span>6,0<i>-</i></span></div>
<div class="c pos" style="left:609.3px;top:520.17px;width:37.8px"><span>ST</span></div>
<div class="c g" style="left:647.1px;top:520.17px;width:76.1px"><span>21.06.2011</span></div>
<div class="c pos r" style="left:723.2px;top:520.17px;width:75.5px"><span>135,66<i>-</i></span></div>
<div class="c pos" style="left:798.7px;top:520.17px;width:38.8px"><span>EUR</span></div>
<div class="c g" style="left:837.5px;top:520.17px;width:69.4px"><span></span></div>
<div class="c g" style="left:906.9px;top:520.17px;width:50.3px"><span style="left:1.2px">5200</span></div>
<div class="c g" style="left:957.2px;top:520.17px;width:83.1px"><span>4500000137</span></div>
<div class="c g r" style="left:1040.3px;top:520.17px;width:31.1px"><span>10</span></div>
<div class="c g" style="left:1071.4px;top:520.17px;width:56.8px"><span style="left:1px">100273</span></div>
<div class="c g" style="left:1128.2px;top:520.17px;width:45.2px"><span>0001</span></div>
<div class="c g" style="left:1173.4px;top:520.17px;width:34.6px"><span style="left:0.6px">P001</span></div>
<div class="c g" style="left:330.5px;top:537.35px;width:37.3px"><span style="left:1px">501</span></div>
<div class="c g tt" style="left:367.8px;top:537.35px;width:114.5px"><span>Eingang ohne Bestell</span></div>
<div class="c g" style="left:482.3px;top:537.35px;width:76px"><span>21.06.2011</span></div>
<div class="c pos r" style="left:558.3px;top:537.35px;width:51px"><span>6,0<i>-</i></span></div>
<div class="c pos" style="left:609.3px;top:537.35px;width:37.8px"><span>ST</span></div>
<div class="c g" style="left:647.1px;top:537.35px;width:76.1px"><span>21.06.2011</span></div>
<div class="c pos r" style="left:723.2px;top:537.35px;width:75.5px"><span>0,00<i>-</i></span></div>
<div class="c pos" style="left:798.7px;top:537.35px;width:38.8px"><span>EUR</span></div>
<div class="c g" style="left:837.5px;top:537.35px;width:69.4px"><span></span></div>
<div class="c g" style="left:906.9px;top:537.35px;width:50.3px"><span style="left:1.2px"></span></div>
<div class="c g" style="left:957.2px;top:537.35px;width:83.1px"><span></span></div>
<div class="c g r" style="left:1040.3px;top:537.35px;width:31.1px"><span></span></div>
<div class="c g" style="left:1071.4px;top:537.35px;width:56.8px"><span style="left:1px">100450</span></div>
<div class="c g" style="left:1128.2px;top:537.35px;width:45.2px"><span>0001</span></div>
<div class="c g" style="left:1173.4px;top:537.35px;width:34.6px"><span style="left:0.6px">P001</span></div>
<div class="c g" style="left:330.5px;top:554.53px;width:37.3px"><span style="left:1px">261</span></div>
<div class="c g tt" style="left:367.8px;top:554.53px;width:114.5px"><span>WA für Auftrag</span></div>
<div class="c g" style="left:482.3px;top:554.53px;width:76px"><span>22.06.2011</span></div>
<div class="c neg r" style="left:558.3px;top:554.53px;width:51px"><span>2,0-</span></div>
<div class="c neg" style="left:609.3px;top:554.53px;width:37.8px"><span>ST</span></div>
<div class="c g" style="left:647.1px;top:554.53px;width:76.1px"><span>22.06.2011</span></div>
<div class="c neg r" style="left:723.2px;top:554.53px;width:75.5px"><span>0,00<i>-</i></span></div>
<div class="c neg" style="left:798.7px;top:554.53px;width:38.8px"><span>EUR</span></div>
<div class="c g" style="left:837.5px;top:554.53px;width:69.4px"><span>5000548</span></div>
<div class="c g" style="left:906.9px;top:554.53px;width:50.3px"><span style="left:1.2px"></span></div>
<div class="c g" style="left:957.2px;top:554.53px;width:83.1px"><span></span></div>
<div class="c g r" style="left:1040.3px;top:554.53px;width:31.1px"><span></span></div>
<div class="c g" style="left:1071.4px;top:554.53px;width:56.8px"><span style="left:1px"></span></div>
<div class="c g" style="left:1128.2px;top:554.53px;width:45.2px"><span>0001</span></div>
<div class="c g" style="left:1173.4px;top:554.53px;width:34.6px"><span style="left:0.6px">P001</span></div>
<div class="c g" style="left:330.5px;top:571.71px;width:37.3px"><span style="left:1px">261</span></div>
<div class="c g tt" style="left:367.8px;top:571.71px;width:114.5px"><span>WA für Auftrag</span></div>
<div class="c g" style="left:482.3px;top:571.71px;width:76px"><span>15.11.2011</span></div>
<div class="c neg r" style="left:558.3px;top:571.71px;width:51px"><span>1,0-</span></div>
<div class="c neg" style="left:609.3px;top:571.71px;width:37.8px"><span>ST</span></div>
<div class="c g" style="left:647.1px;top:571.71px;width:76.1px"><span>15.11.2011</span></div>
<div class="c neg r" style="left:723.2px;top:571.71px;width:75.5px"><span>0,00<i>-</i></span></div>
<div class="c neg" style="left:798.7px;top:571.71px;width:38.8px"><span>EUR</span></div>
<div class="c g" style="left:837.5px;top:571.71px;width:69.4px"><span>5000988</span></div>
<div class="c g" style="left:906.9px;top:571.71px;width:50.3px"><span style="left:1.2px"></span></div>
<div class="c g" style="left:957.2px;top:571.71px;width:83.1px"><span></span></div>
<div class="c g r" style="left:1040.3px;top:571.71px;width:31.1px"><span></span></div>
<div class="c g" style="left:1071.4px;top:571.71px;width:56.8px"><span style="left:1px"></span></div>
<div class="c g" style="left:1128.2px;top:571.71px;width:45.2px"><span>0001</span></div>
<div class="c g" style="left:1173.4px;top:571.71px;width:34.6px"><span style="left:0.6px">P001</span></div>
<div class="sub" style="top:588.88px">
<span class="sm" style="left:3.5px">L900100</span>
<b class="ico" style="left:120px"></b>
<b class="sq" style="left:552.9px"></b>
<span class="st r" style="left:549.9px;width:49.8px">13,0<i>-</i></span>
<span class="st" style="left:603.9px">ST</span>
<b class="sq" style="left:717.9px"></b>
<span class="st r" style="left:714.8px;width:74.3px">135,66<i>-</i></span>
<span class="st" style="left:793.3px">EUR</span>
</div>
<div class="c mat" style="left:8.4px;top:606.06px;width:132.9px;height:34.35px"><span>L900101</span></div>
<div class="c txt" style="left:141.3px;top:606.06px;width:189.2px;height:34.35px"><span style="left:1.2px">Lichtschalter</span></div>
<div class="c g" style="left:330.5px;top:606.06px;width:37.3px"><span style="left:1px">101</span></div>
<div class="c g tt" style="left:367.8px;top:606.06px;width:114.5px"><span>WE zur Kontierung</span></div>
<div class="c g" style="left:482.3px;top:606.06px;width:76px"><span>05.06.2011</span></div>
<div class="c pos r" style="left:558.3px;top:606.06px;width:51px"><span>12,0<i>-</i></span></div>
<div class="c pos" style="left:609.3px;top:606.06px;width:37.8px"><span>ST</span></div>
<div class="c g" style="left:647.1px;top:606.06px;width:76.1px"><span>05.06.2011</span></div>
<div class="c pos r" style="left:723.2px;top:606.06px;width:75.5px"><span>0,00<i>-</i></span></div>
<div class="c pos" style="left:798.7px;top:606.06px;width:38.8px"><span>EUR</span></div>
<div class="c g" style="left:837.5px;top:606.06px;width:69.4px"><span></span></div>
<div class="c g" style="left:906.9px;top:606.06px;width:50.3px"><span style="left:1.2px">5300</span></div>
<div class="c g" style="left:957.2px;top:606.06px;width:83.1px"><span>4500000148</span></div>
<div class="c g r" style="left:1040.3px;top:606.06px;width:31.1px"><span>10</span></div>
<div class="c g" style="left:1071.4px;top:606.06px;width:56.8px"><span style="left:1px">100273</span></div>
<div class="c g" style="left:1128.2px;top:606.06px;width:45.2px"><span>0001</span></div>
<div class="c g" style="left:1173.4px;top:606.06px;width:34.6px"><span style="left:0.6px">P001</span></div>
<div class="c g" style="left:330.5px;top:623.24px;width:37.3px"><span style="left:1px">101</span></div>
<div class="c g tt" style="left:367.8px;top:623.24px;width:114.5px"><span>WE zur Kontierung</span></div>
<div class="c g" style="left:482.3px;top:623.24px;width:76px"><span>06.07.2011</span></div>
<div class="c pos r" style="left:558.3px;top:623.24px;width:51px"><span>3,0<i>-</i></span></div>
<div class="c pos" style="left:609.3px;top:623.24px;width:37.8px"><span>ST</span></div>
<div class="c g" style="left:647.1px;top:623.24px;width:76.1px"><span>06.07.2011</span></div>
<div class="c pos r" style="left:723.2px;top:623.24px;width:75.5px"><span>28,56<i>-</i></span></div>
<div class="c pos" style="left:798.7px;top:623.24px;width:38.8px"><span>EUR</span></div>
<div class="c g" style="left:837.5px;top:623.24px;width:69.4px"><span></span></div>
<div class="c g" style="left:906.9px;top:623.24px;width:50.3px"><span style="left:1.2px">5200</span></div>
<div class="c g" style="left:957.2px;top:623.24px;width:83.1px"><span>4500000149</span></div>
<div class="c g r" style="left:1040.3px;top:623.24px;width:31.1px"><span>10</span></div>
<div class="c g" style="left:1071.4px;top:623.24px;width:56.8px"><span style="left:1px">100273</span></div>
<div class="c g" style="left:1128.2px;top:623.24px;width:45.2px"><span>0001</span></div>
<div class="c g" style="left:1173.4px;top:623.24px;width:34.6px"><span style="left:0.6px">P001</span></div>
<div class="sub" style="top:640.41px">
<span class="sm" style="left:3.5px">L900101</span>
<b class="ico" style="left:120px"></b>
<b class="sq" style="left:552.9px"></b>
<span class="st r" style="left:549.9px;width:49.8px">15,0<i>-</i></span>
<span class="st" style="left:603.9px">ST</span>
<b class="sq" style="left:717.9px"></b>
<span class="st r" style="left:714.8px;width:74.3px">28,56<i>-</i></span>
<span class="st" style="left:793.3px">EUR</span>
</div>
<div class="c mat" style="left:8.4px;top:657.59px;width:132.9px;height:34.35px"><span>L900200</span></div>
<div class="c txt" style="left:141.3px;top:657.59px;width:189.2px;height:34.35px"><span style="left:1.2px">Briefkasten</span></div>
<div class="c g" style="left:330.5px;top:657.59px;width:37.3px"><span style="left:1px">101</span></div>
<div class="c g tt" style="left:367.8px;top:657.59px;width:114.5px"><span>WE zur Kontierung</span></div>
<div class="c g" style="left:482.3px;top:657.59px;width:76px"><span>06.07.2011</span></div>
<div class="c pos r" style="left:558.3px;top:657.59px;width:51px"><span>13,0<i>-</i></span></div>
<div class="c pos" style="left:609.3px;top:657.59px;width:37.8px"><span>ST</span></div>
<div class="c g" style="left:647.1px;top:657.59px;width:76.1px"><span>06.07.2011</span></div>
<div class="c pos r" style="left:723.2px;top:657.59px;width:75.5px"><span>618,80<i>-</i></span></div>
<div class="c pos" style="left:798.7px;top:657.59px;width:38.8px"><span>EUR</span></div>
<div class="c g" style="left:837.5px;top:657.59px;width:69.4px"><span></span></div>
<div class="c g" style="left:906.9px;top:657.59px;width:50.3px"><span style="left:1.2px">5100</span></div>
<div class="c g" style="left:957.2px;top:657.59px;width:83.1px"><span>4500000150</span></div>
<div class="c g r" style="left:1040.3px;top:657.59px;width:31.1px"><span>10</span></div>
<div class="c g" style="left:1071.4px;top:657.59px;width:56.8px"><span style="left:1px">100273</span></div>
<div class="c g" style="left:1128.2px;top:657.59px;width:45.2px"><span>0001</span></div>
<div class="c g" style="left:1173.4px;top:657.59px;width:34.6px"><span style="left:0.6px">P001</span></div>
<div class="c g" style="left:330.5px;top:674.77px;width:37.3px"><span style="left:1px">201</span></div>
<div class="c g tt" style="left:367.8px;top:674.77px;width:114.5px"><span>WA für Kostenstelle</span></div>
<div class="c g" style="left:482.3px;top:674.77px;width:76px"><span>06.07.2011</span></div>
<div class="c neg r" style="left:558.3px;top:674.77px;width:51px"><span>5,0-</span></div>
<div class="c neg" style="left:609.3px;top:674.77px;width:37.8px"><span>ST</span></div>
<div class="c g" style="left:647.1px;top:674.77px;width:76.1px"><span>06.07.2011</span></div>
<div class="c neg r" style="left:723.2px;top:674.77px;width:75.5px"><span>0,00<i>-</i></span></div>
<div class="c neg" style="left:798.7px;top:674.77px;width:38.8px"><span>EUR</span></div>
<div class="c g" style="left:837.5px;top:674.77px;width:69.4px"><span></span></div>
<div class="c g" style="left:906.9px;top:674.77px;width:50.3px"><span style="left:1.2px">5800</span></div>
<div class="c g" style="left:957.2px;top:674.77px;width:83.1px"><span></span></div>
<div class="c g r" style="left:1040.3px;top:674.77px;width:31.1px"><span></span></div>
<div class="c g" style="left:1071.4px;top:674.77px;width:56.8px"><span style="left:1px"></span></div>
<div class="c g" style="left:1128.2px;top:674.77px;width:45.2px"><span>0001</span></div>
<div class="c g" style="left:1173.4px;top:674.77px;width:34.6px"><span style="left:0.6px">P001</span></div>
<div class="sub" style="top:691.94px">
<span class="sm" style="left:3.5px">L900200</span>
<b class="ico" style="left:120px"></b>
<b class="sq" style="left:552.9px"></b>
<span class="st r" style="left:549.9px;width:49.8px">8,0<i>-</i></span>
<span class="st" style="left:603.9px">ST</span>
<b class="sq" style="left:717.9px"></b>
<span class="st r" style="left:714.8px;width:74.3px">618,80<i>-</i></span>
<span class="st" style="left:793.3px">EUR</span>
</div>
<div class="c mat" style="left:8.4px;top:709.12px;width:132.9px;height:17.18px"><span>L900300</span></div>
<div class="c txt" style="left:141.3px;top:709.12px;width:189.2px;height:17.18px"><span style="left:1.2px">Leuchtmittel 100 W</span></div>
<div class="c g" style="left:330.5px;top:709.12px;width:37.3px"><span style="left:1px">101</span></div>
<div class="c g tt" style="left:367.8px;top:709.12px;width:114.5px"><span>WE Wareneingang</span></div>
<div class="c g" style="left:482.3px;top:709.12px;width:76px"><span>20.06.2011</span></div>
<div class="c pos r" style="left:558.3px;top:709.12px;width:51px"><span>10,0<i>-</i></span></div>
<div class="c pos" style="left:609.3px;top:709.12px;width:37.8px"><span>ST</span></div>
<div class="c g" style="left:647.1px;top:709.12px;width:76.1px"><span>20.06.2011</span></div>
<div class="c pos r" style="left:723.2px;top:709.12px;width:75.5px"><span>15.000,00<i>-</i></span></div>
<div class="c pos" style="left:798.7px;top:709.12px;width:38.8px"><span>EUR</span></div>
<div class="c g" style="left:837.5px;top:709.12px;width:69.4px"><span></span></div>
<div class="c g" style="left:906.9px;top:709.12px;width:50.3px"><span style="left:1.2px"></span></div>
<div class="c g" style="left:957.2px;top:709.12px;width:83.1px"><span>4500000015</span></div>
<div class="c g r" style="left:1040.3px;top:709.12px;width:31.1px"><span>10</span></div>
<div class="c g" style="left:1071.4px;top:709.12px;width:56.8px"><span style="left:1px">100273</span></div>
<div class="c g" style="left:1128.2px;top:709.12px;width:45.2px"><span>0001</span></div>
<div class="c g" style="left:1173.4px;top:709.12px;width:34.6px"><span style="left:0.6px">P001</span></div>
<div class="abs" style="left:8.4px;top:90.5px;width:1.2px;height:623px;background:#dedee2"></div>
</div></div>
<svg style="position:absolute;left:0;top:0" width="1240" height="737" viewBox="0 0 1240 737">
 <g fill="none" stroke="#4d4d4d" stroke-width="1.9" stroke-linecap="butt" stroke-linejoin="miter">
  <path d="M1215 99.6 L1218.5 96.3 L1222 99.6"/>
  <path d="M1215 113.2 L1218.5 116.6 L1222 113.2"/>
  <path d="M1215 690.4 L1218.5 687 L1222 690.4"/>
  <path d="M1215 703.6 L1218.5 707 L1222 703.6"/>
  <path d="M340.5 720 L337 723.4 L340.5 726.8"/>
  <path d="M352 720 L355.5 723.4 L352 726.8"/>
  <path d="M1185.3 720 L1181.8 723.4 L1185.3 726.8"/>
  <path d="M1198 720 L1201.5 723.4 L1198 726.8"/>
 </g>
 <rect x="1214.2" y="548" width="9.4" height="74.6" fill="#b9c1cc"/>
 <rect x="365.2" y="719.8" width="626.7" height="8.8" fill="#b9c1cc"/>
 <g fill="#f4f6f8">
  <rect x="1217" y="585" width="4" height="0.9"/><rect x="1217" y="586.8" width="4" height="0.9"/><rect x="1217" y="588.6" width="4" height="0.9"/>
  <rect x="675.5" y="722" width="0.9" height="4"/><rect x="677.3" y="722" width="0.9" height="4"/><rect x="679.1" y="722" width="0.9" height="4"/>
 </g>
</svg>
</body></html>
